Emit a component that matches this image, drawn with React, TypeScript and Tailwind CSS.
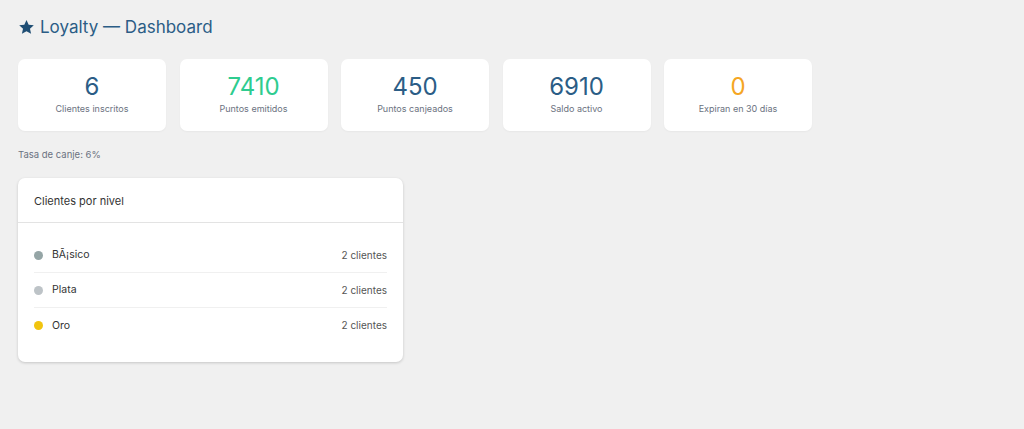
type Stat = {
  value: string;
  label: string;
  color: string;
};

const stats: Stat[] = [
  { value: "6", label: "Clientes inscritos", color: "text-[#2b5d86]" },
  { value: "7410", label: "Puntos emitidos", color: "text-[#2ecc8f]" },
  { value: "450", label: "Puntos canjeados", color: "text-[#2b5d86]" },
  { value: "6910", label: "Saldo activo", color: "text-[#2b5d86]" },
  { value: "0", label: "Expiran en 30 días", color: "text-[#f5a623]" },
];

const tiers = [
  { name: "BÃ¡sico", dot: "bg-[#95a5a6]", count: "2 clientes" },
  { name: "Plata", dot: "bg-[#bdc3c7]", count: "2 clientes" },
  { name: "Oro", dot: "bg-[#f1c40f]", count: "2 clientes" },
];

function StarIcon() {
  return (
    <svg viewBox="0 0 24 24" className="h-[17px] w-[17px] fill-[#1f4e74]">
      <path d="M12 1.5l3.1 6.6 7.2.8-5.4 4.9 1.6 7.1L12 17.2l-6.5 3.7 1.6-7.1-5.4-4.9 7.2-.8z" />
    </svg>
  );
}

export default function App() {
  return (
    <div className="min-h-screen bg-[#f0f0f0] px-[18px] pt-[15px] font-['Inter','Liberation_Sans',sans-serif]">
      <h1 className="flex items-center gap-[5px] text-[17px] leading-[24px] text-[#2b5d86]">
        <StarIcon />
        Loyalty — Dashboard
      </h1>

      <div className="mt-[20px] flex gap-[13.5px]">
        {stats.map((s) => (
          <div
            key={s.label}
            className="flex h-[72px] w-[148px] flex-col items-center rounded-[7px] bg-white pt-[13px] shadow-[0_1px_2px_rgba(0,0,0,0.04)]"
          >
            <div className={`text-[24px] leading-[29px] ${s.color}`}>{s.value}</div>
            <div className="mt-[2px] text-[9px] leading-[12px] text-[#6b7280]">{s.label}</div>
          </div>
        ))}
      </div>

      <p className="mt-[18px] text-[9.5px] leading-[12px] text-[#6b7280]">Tasa de canje: 6%</p>

      <div className="mt-[17px] w-[385px] rounded-[7px] bg-white shadow-[0_1px_3px_rgba(0,0,0,0.18)]">
        <div className="border-b border-[#e3e3e3] px-[16px] pt-[15px] pb-[13px] text-[11px] leading-[16px] text-[#333]">
          Clientes por nivel
        </div>
        <div className="px-[16px] pt-[15px] pb-[19px]">
          {tiers.map((t, i) => (
            <div
              key={t.name}
              className={`flex h-[35px] items-center justify-between ${
                i < tiers.length - 1 ? "border-b border-[#f0f0f0]" : ""
              }`}
            >
              <div className="flex items-center gap-[9px] text-[10.5px] text-[#333]">
                <span className={`h-[9px] w-[9px] rounded-full ${t.dot}`} />
                {t.name}
              </div>
              <span className="text-[10px] text-[#555]">{t.count}</span>
            </div>
          ))}
        </div>
      </div>
    </div>
  );
}
